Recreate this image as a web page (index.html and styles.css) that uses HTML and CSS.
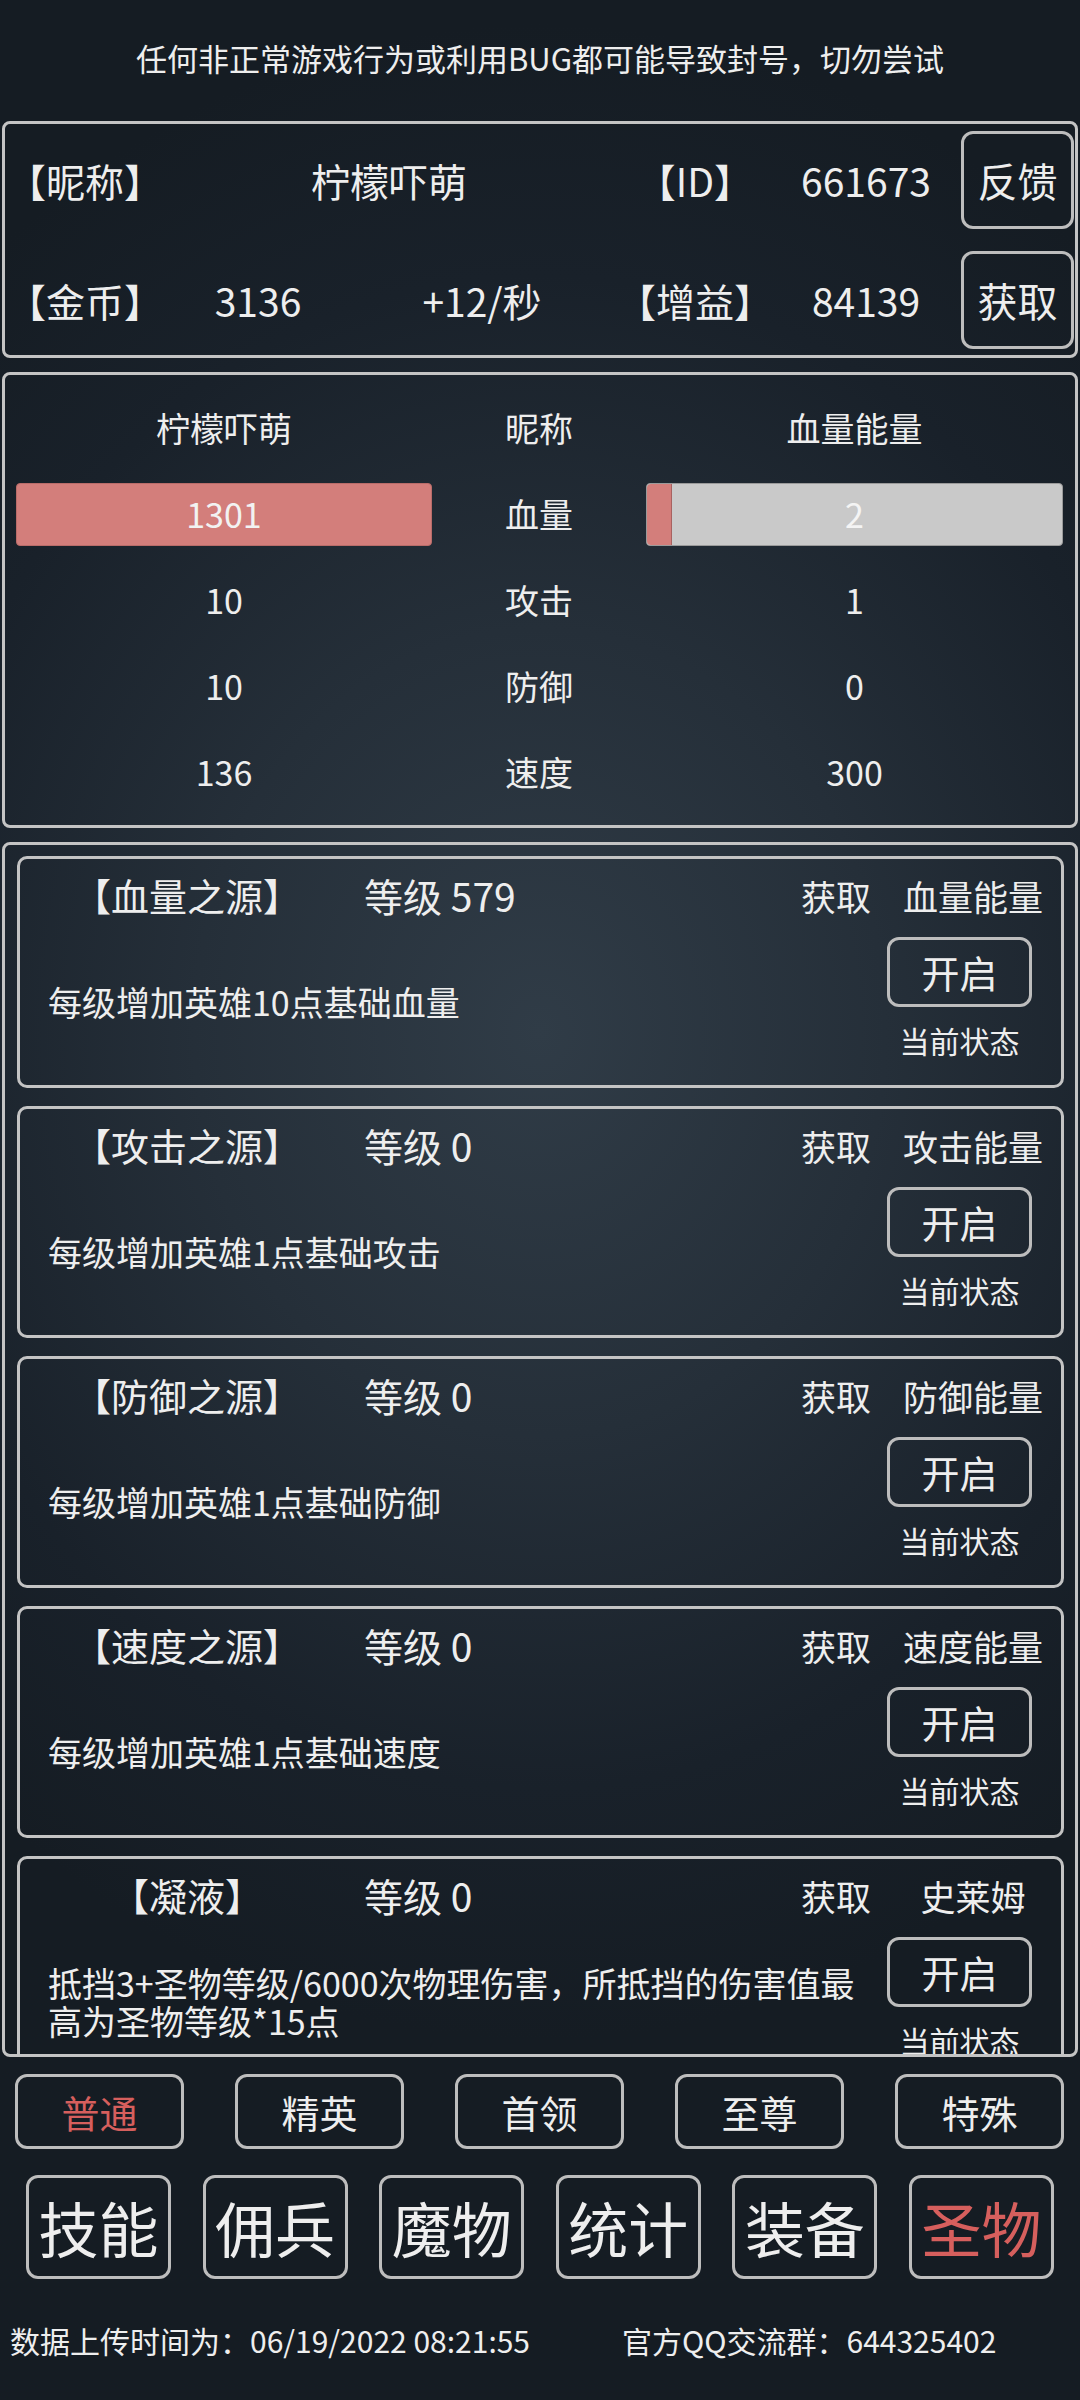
FILE: index.html
```html
<!DOCTYPE html>
<html lang="zh-CN">
<head>
<meta charset="utf-8">
<title>圣物</title>
<link rel="stylesheet" href="styles.css">
</head>
<body>
<div class="screen">
  <div class="notice">任何非正常游戏行为或利用BUG都可能导致封号，切勿尝试</div>

  <section class="panel info">
    <div class="lbl">【昵称】</div>
    <div class="val span2">柠檬吓萌</div>
    <div class="val">【ID】</div>
    <div class="val">661673</div>
    <button class="btn side">反馈</button>

    <div class="lbl">【金币】</div>
    <div class="val">3136</div>
    <div class="val">+12/秒</div>
    <div class="val">【增益】</div>
    <div class="val">84139</div>
    <button class="btn side">获取</button>
  </section>

  <section class="panel stats">
    <div class="cell">柠檬吓萌</div>
    <div class="cell">昵称</div>
    <div class="cell">血量能量</div>

    <div class="cell"><div class="bar full">1301</div></div>
    <div class="cell">血量</div>
    <div class="cell"><div class="bar empty"><span class="fill" style="width:25px"></span><span class="num">2</span></div></div>

    <div class="cell">10</div>
    <div class="cell">攻击</div>
    <div class="cell">1</div>

    <div class="cell">10</div>
    <div class="cell">防御</div>
    <div class="cell">0</div>

    <div class="cell">136</div>
    <div class="cell">速度</div>
    <div class="cell">300</div>
  </section>

  <section class="panel talents">
    <div class="card">
      <div class="card-head">
        <div class="title">【血量之源】</div>
        <div class="level">等级 579</div>
        <div class="get">获取</div>
        <div class="src">血量能量</div>
      </div>
      <div class="card-body">
        <div class="desc">每级增加英雄10点基础血量</div>
        <div class="ctrl">
          <button class="btn open">开启</button>
          <div class="state">当前状态</div>
        </div>
      </div>
    </div>

    <div class="card">
      <div class="card-head">
        <div class="title">【攻击之源】</div>
        <div class="level">等级 0</div>
        <div class="get">获取</div>
        <div class="src">攻击能量</div>
      </div>
      <div class="card-body">
        <div class="desc">每级增加英雄1点基础攻击</div>
        <div class="ctrl">
          <button class="btn open">开启</button>
          <div class="state">当前状态</div>
        </div>
      </div>
    </div>

    <div class="card">
      <div class="card-head">
        <div class="title">【防御之源】</div>
        <div class="level">等级 0</div>
        <div class="get">获取</div>
        <div class="src">防御能量</div>
      </div>
      <div class="card-body">
        <div class="desc">每级增加英雄1点基础防御</div>
        <div class="ctrl">
          <button class="btn open">开启</button>
          <div class="state">当前状态</div>
        </div>
      </div>
    </div>

    <div class="card">
      <div class="card-head">
        <div class="title">【速度之源】</div>
        <div class="level">等级 0</div>
        <div class="get">获取</div>
        <div class="src">速度能量</div>
      </div>
      <div class="card-body">
        <div class="desc">每级增加英雄1点基础速度</div>
        <div class="ctrl">
          <button class="btn open">开启</button>
          <div class="state">当前状态</div>
        </div>
      </div>
    </div>

    <div class="card">
      <div class="card-head">
        <div class="title">【凝液】</div>
        <div class="level">等级 0</div>
        <div class="get">获取</div>
        <div class="src">史莱姆</div>
      </div>
      <div class="card-body">
        <div class="desc">抵挡3+圣物等级/6000次物理伤害，所抵挡的伤害值最高为圣物等级*15点</div>
        <div class="ctrl">
          <button class="btn open">开启</button>
          <div class="state">当前状态</div>
        </div>
      </div>
    </div>
  </section>

  <nav class="tabs">
    <button class="btn tab active">普通</button>
    <button class="btn tab">精英</button>
    <button class="btn tab">首领</button>
    <button class="btn tab">至尊</button>
    <button class="btn tab">特殊</button>
  </nav>

  <nav class="menu">
    <button class="btn big">技能</button>
    <button class="btn big">佣兵</button>
    <button class="btn big">魔物</button>
    <button class="btn big">统计</button>
    <button class="btn big">装备</button>
    <button class="btn big active">圣物</button>
  </nav>

  <footer class="footer">
    <span>数据上传时间为：06/19/2022 08:21:55</span>
    <span>官方QQ交流群：644325402</span>
  </footer>
</div>
</body>
</html>
```

FILE: styles.css
```css
* { box-sizing: border-box; }

html, body {
  margin: 0;
  padding: 0;
}

body {
  width: 1080px;
  height: 2400px;
  overflow: hidden;
  font-family: "Noto Sans CJK SC", "Noto Sans", sans-serif;
  font-weight: 400;
  color: #eeeeee;
  background: radial-gradient(ellipse 80% 42% at 50% 43%, #303c47 0%, #252f39 40%, #19212a 75%, #151c23 100%);
}

.screen {
  width: 1080px;
  height: 2400px;
  display: flex;
  flex-direction: column;
}

.notice {
  height: 121px;
  display: flex;
  align-items: center;
  justify-content: center;
  font-size: 31px;
  line-height: 1;
  padding-bottom: 6px;
}

.panel {
  margin: 0 2px;
  border: 3px solid #c4c4c4;
  border-radius: 8px;
}

.btn {
  font-family: inherit;
  font-weight: inherit;
  color: #eeeeee;
  background: transparent;
  border: 3px solid #bdbdbd;
  border-radius: 12px;
  padding: 0;
  line-height: 1;
  display: flex;
  align-items: center;
  justify-content: center;
}

/* info panel */
.info {
  height: 237px;
  padding: 7px 6px 6px 2px;
  display: grid;
  grid-template-columns: 158px 186px 262px 164px 178px 119px;
  grid-template-rows: 98px 98px;
  row-gap: 22px;
  align-items: center;
  font-size: 39px;
}

.info .lbl {
  text-align: left;
  line-height: 1;
}

.info .val {
  text-align: center;
  line-height: 1;
}

.info .span2 {
  grid-column: span 2;
}

.btn.side {
  justify-self: end;
  width: 113px;
  height: 98px;
  font-size: 40px;
}

/* stats panel */
.stats {
  margin-top: 14px;
  height: 456px;
  padding: 21px 12px 21px 11px;
  display: grid;
  grid-template-columns: 416px 214px 417px;
  grid-auto-rows: 64px;
  row-gap: 22px;
  font-size: 34px;
}

.stats .cell {
  display: flex;
  align-items: center;
  justify-content: center;
  line-height: 1;
}

.bar {
  width: 100%;
  height: 63px;
  border-radius: 4px;
  display: flex;
  align-items: center;
  justify-content: center;
  position: relative;
  overflow: hidden;
}

.bar.full {
  background: #d37e7b;
  border: 1px solid #b96c69;
  color: #f2f2f2;
}

.bar.empty {
  background: #c9c9c9;
  border: 1px solid #9a9a9a;
  color: #f4f4f4;
}

.bar .fill {
  position: absolute;
  left: 0;
  top: 0;
  bottom: 0;
  background: #d37e7b;
  border-right: 1px solid #a86260;
  border-radius: 4px 0 0 4px;
}

.bar .num {
  position: relative;
}

/* talents panel */
.talents {
  margin-top: 14px;
  height: 1215px;
  padding: 11px 11px 0 12px;
  overflow: hidden;
  display: flex;
  flex-direction: column;
  gap: 18px;
}

.card {
  flex: 0 0 232px;
  height: 232px;
  border: 3px solid #c4c4c4;
  border-radius: 10px;
  display: flex;
  flex-direction: column;
}

.card-head {
  height: 72px;
  display: grid;
  grid-template-columns: 334px 1fr 100px 150px;
  align-items: center;
  padding-right: 13px;
  line-height: 1;
}

.card-head .title {
  text-align: center;
  font-size: 38px;
}

.card-head .level {
  font-size: 39px;
  padding-left: 10px;
}

.card-head .get,
.card-head .src {
  text-align: center;
  font-size: 35px;
}

.card-head .get {
  margin-right: 24px;
}

.card-body {
  margin-top: 6px;
  display: flex;
  align-items: center;
}

.desc {
  flex: 1;
  padding: 6px 14px 0 28px;
  font-size: 34px;
  line-height: 38px;
}

.ctrl {
  width: 145px;
  margin-right: 29px;
  display: flex;
  flex-direction: column;
  align-items: center;
}

.btn.open {
  width: 145px;
  height: 70px;
  font-size: 38px;
}

.state {
  margin-top: 13px;
  height: 40px;
  line-height: 40px;
  font-size: 30px;
}

/* tabs */
.tabs {
  margin-top: 17px;
  padding: 0 16px 0 15px;
  display: flex;
  justify-content: space-between;
}

.btn.tab {
  width: 169px;
  height: 75px;
  font-size: 38px;
}

.menu {
  margin-top: 26px;
  padding: 0 26px;
  display: flex;
  justify-content: space-between;
}

.btn.big {
  width: 145px;
  height: 104px;
  font-size: 60px;
}

.btn.active {
  color: #d65f5d;
}

.footer {
  margin-top: 41px;
  height: 40px;
  padding-left: 10px;
  display: grid;
  grid-template-columns: 612px auto;
  align-items: center;
  font-size: 30px;
  line-height: 1;
}
```
